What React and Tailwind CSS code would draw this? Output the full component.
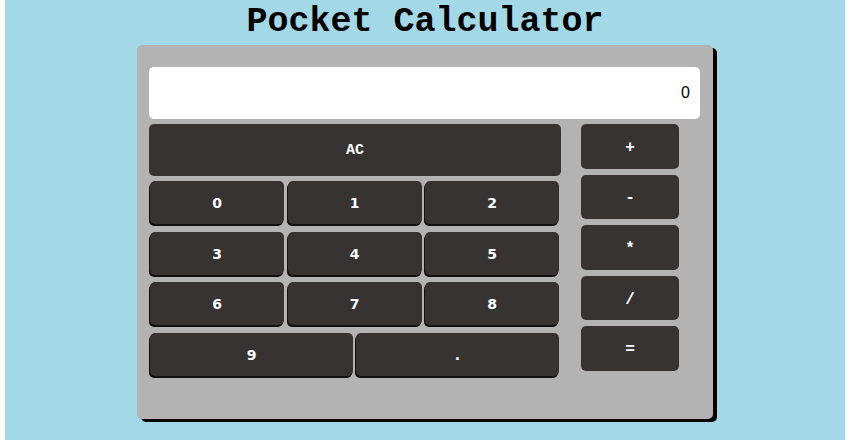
import React from 'react';

const mono = { fontFamily: '"Liberation Mono", "Courier New", monospace' };
const sans = { fontFamily: '"DejaVu Sans", "Open Sans", sans-serif' };

const NumKey = ({ label }) => (
  <button
    className="h-[43px] rounded-[5px] bg-[#373333] pt-[2px] text-[14px] font-bold text-white shadow-[-1px_2px_0_#111]"
    style={sans}
  >
    {label}
  </button>
);

const OpKey = ({ label }) => (
  <button
    className="h-[44.6px] w-full rounded-[5px] bg-[#373333] pt-[3px] text-[16px] font-bold text-white"
    style={mono}
  >
    {label}
  </button>
);

export default function App() {
  return (
    <div className="mx-[5px] h-[440px] bg-[#a3d8e6]">
      <h1
        className="text-center text-[35px] font-bold leading-[45px] text-black"
        style={mono}
      >
        Pocket Calculator
      </h1>

      <div className="mx-auto h-[374px] w-[576px] rounded-[5px] bg-[#b3b3b3] pt-[22px] pl-[12px] pr-[13px] shadow-[4px_3px_0_#000]">
        {/* display */}
        <div
          className="flex h-[52px] items-center justify-end rounded-[5px] bg-white pr-[10px] text-[16px] text-black"
          style={{ fontFamily: '"Liberation Sans", Arial, sans-serif' }}
        >
          0
        </div>

        <div className="mt-[5px] flex">
          {/* left keypad */}
          <div className="w-[412px]">
            <button
              className="h-[52px] w-full rounded-[5px] bg-[#373333] pt-[2px] text-[15px] font-bold text-white"
              style={mono}
            >
              AC
            </button>
            <div className="mt-[5px] grid grid-cols-3 gap-x-[3.5px] gap-y-[7.67px] pl-[1px] pr-[2px]">
              {['0', '1', '2', '3', '4', '5', '6', '7', '8'].map((n) => (
                <NumKey key={n} label={n} />
              ))}
            </div>
            <div className="mt-[7.67px] grid grid-cols-2 gap-x-[3px] pl-[1px] pr-[2px]">
              <NumKey label="9" />
              <NumKey label="." />
            </div>
          </div>

          {/* operators */}
          <div className="ml-[20px] flex w-[98px] flex-col gap-[6px]">
            {['+', '-', '*', '/', '='].map((op) => (
              <OpKey key={op} label={op} />
            ))}
          </div>
        </div>
      </div>
    </div>
  );
}
